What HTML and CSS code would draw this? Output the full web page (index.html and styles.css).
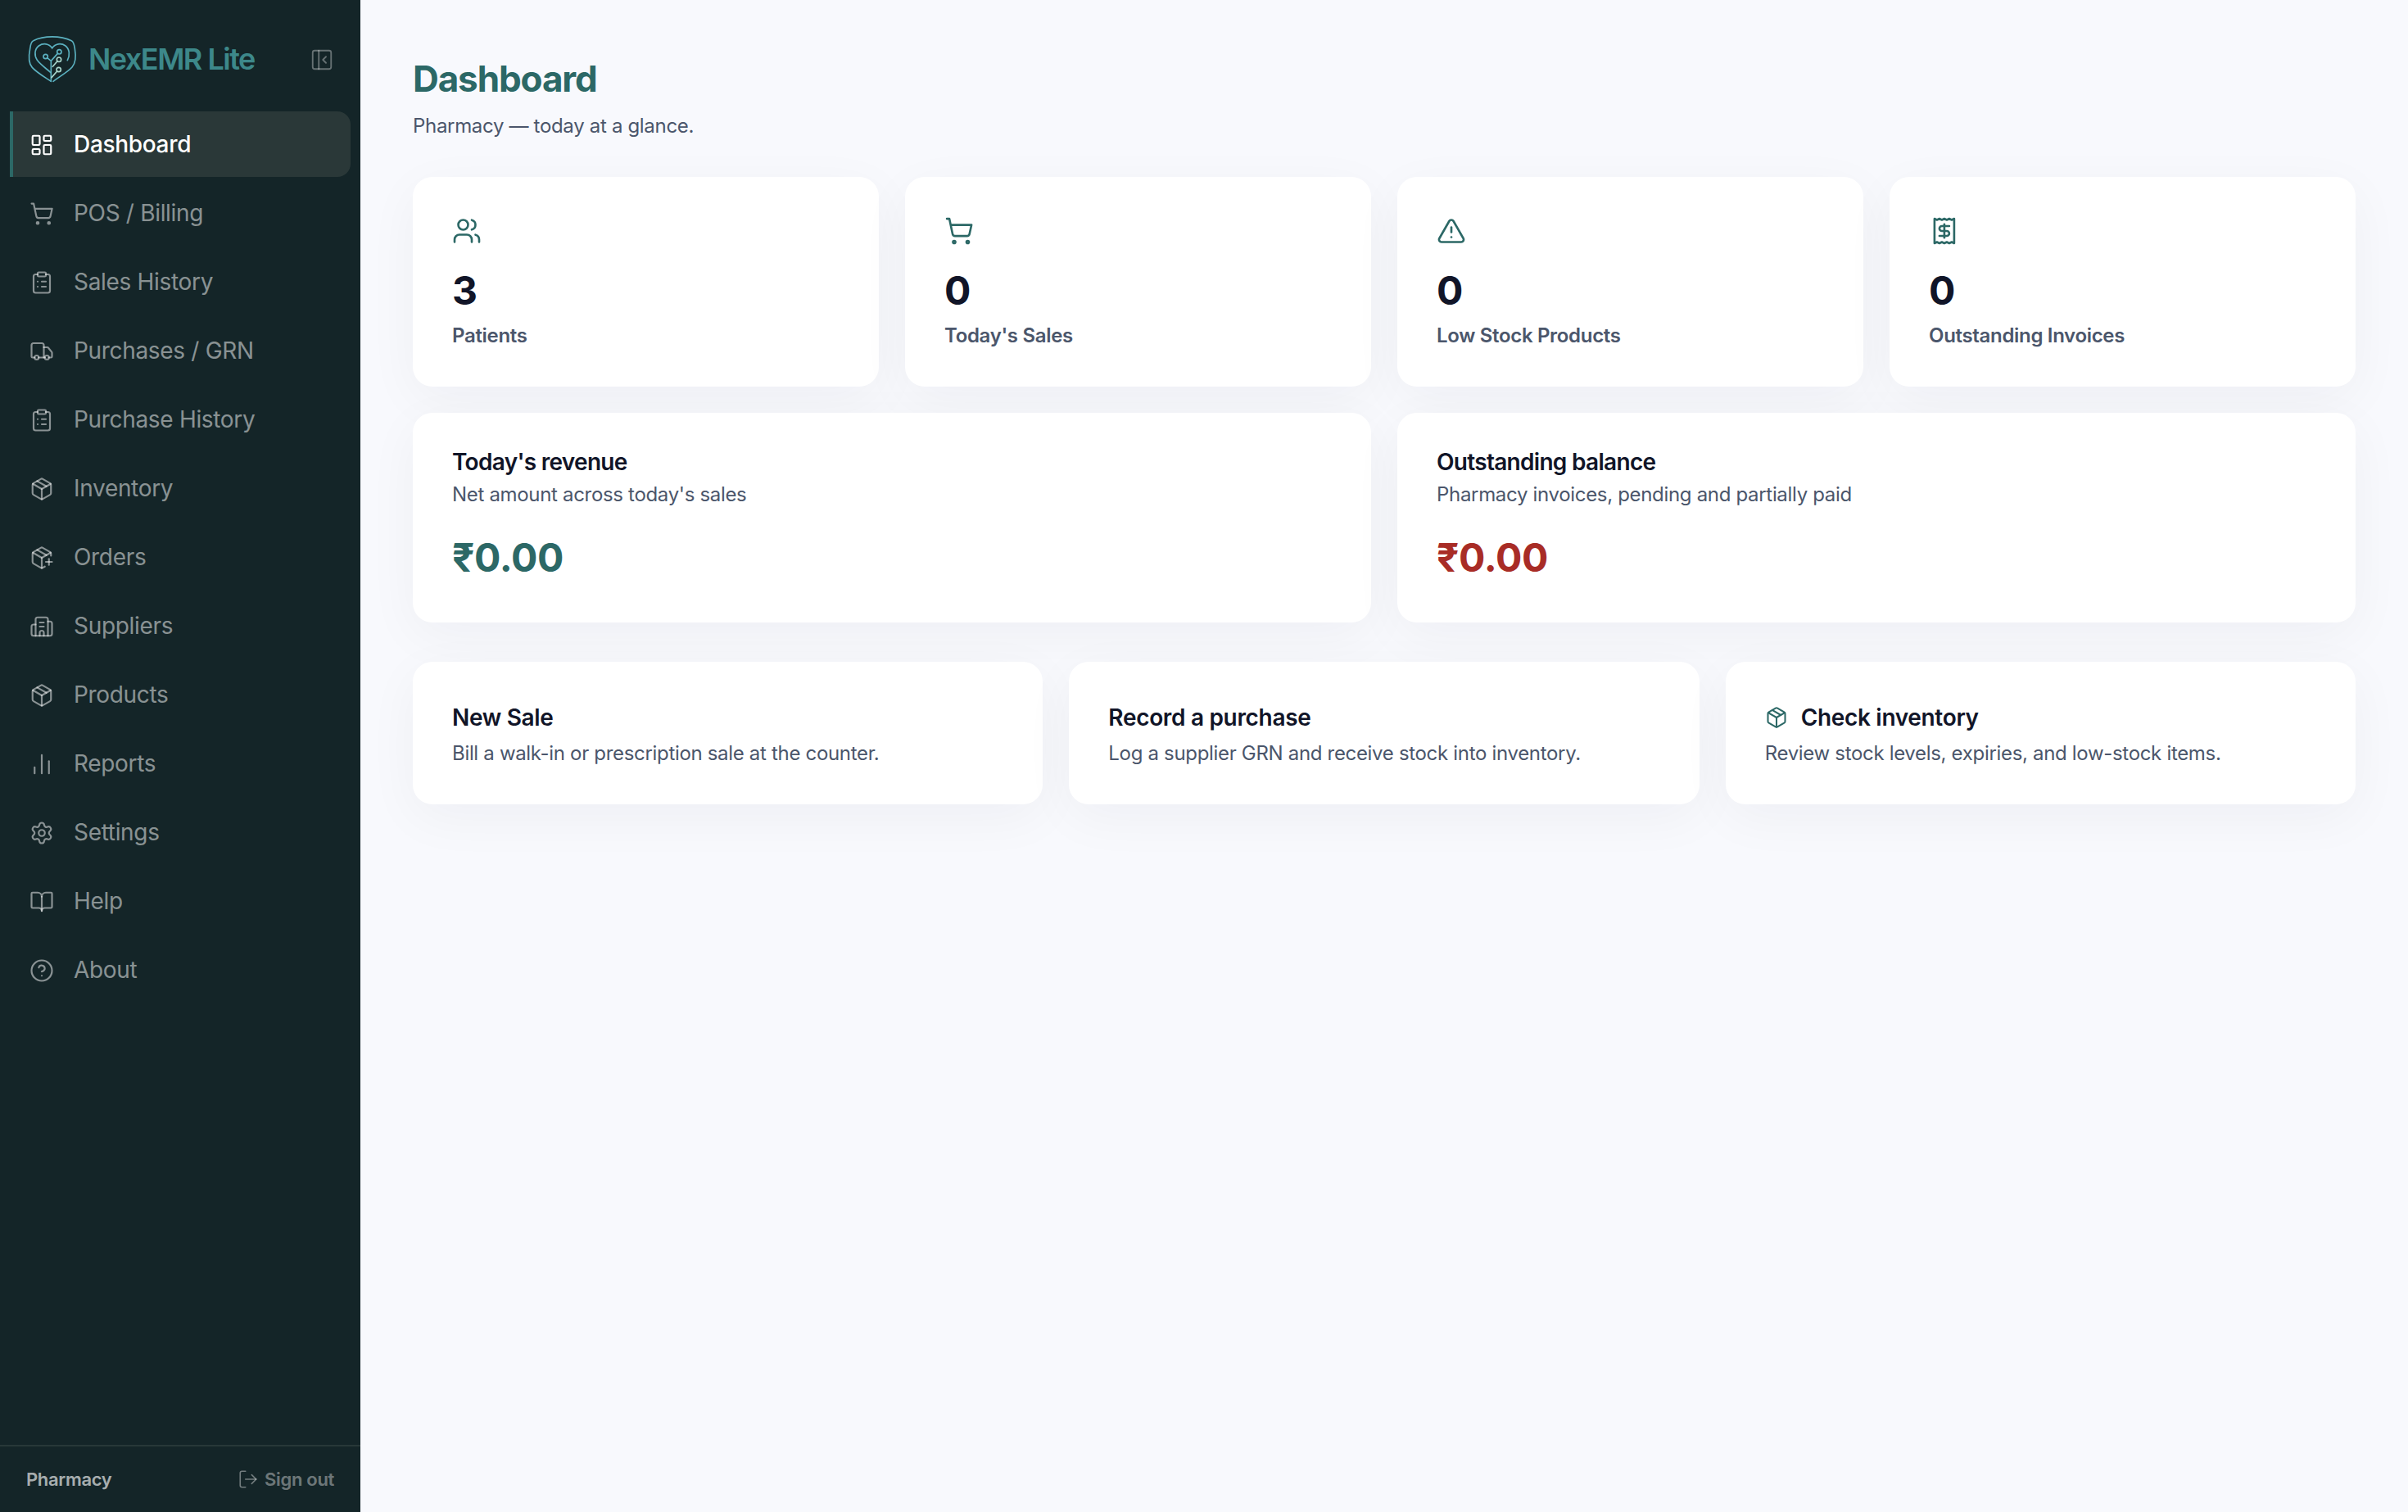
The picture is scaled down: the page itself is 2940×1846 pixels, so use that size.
FILE: index.html
```html
<!DOCTYPE html>
<html lang="en">
<head>
  <meta charset="UTF-8">
  <meta name="viewport" content="width=device-width, initial-scale=1.0">
  <title>NexEMR Lite</title>
  <link rel="stylesheet" href="styles.css">
</head>
<body>
  <!-- shared icons -->
  <svg class="sprite">
    <symbol id="i-dashboard" viewBox="0 0 24 24"><rect x="3" y="3" width="7" height="9" rx="1"/><rect x="14" y="3" width="7" height="5" rx="1"/><rect x="14" y="12" width="7" height="9" rx="1"/><rect x="3" y="16" width="7" height="5" rx="1"/></symbol>
    <symbol id="i-cart" viewBox="0 0 24 24"><circle cx="8" cy="21" r="1"/><circle cx="19" cy="21" r="1"/><path d="M2.05 2.05h2l2.66 12.42a2 2 0 0 0 2 1.58h9.78a2 2 0 0 0 1.95-1.57l1.65-7.43H5.12"/></symbol>
    <symbol id="i-clipboard" viewBox="0 0 24 24"><rect x="8" y="2" width="8" height="4" rx="1"/><path d="M16 4h2a2 2 0 0 1 2 2v14a2 2 0 0 1-2 2H6a2 2 0 0 1-2-2V6a2 2 0 0 1 2-2h2"/><path d="M12 11h4"/><path d="M12 16h4"/><path d="M8 11h.01"/><path d="M8 16h.01"/></symbol>
    <symbol id="i-truck" viewBox="0 0 24 24"><path d="M14 18V6a2 2 0 0 0-2-2H4a2 2 0 0 0-2 2v11a1 1 0 0 0 1 1h2"/><path d="M15 18H9"/><path d="M19 18h2a1 1 0 0 0 1-1v-3.65a1 1 0 0 0-.22-.624l-3.48-4.35A1 1 0 0 0 17.52 8H14"/><circle cx="17" cy="18" r="2"/><circle cx="7" cy="18" r="2"/></symbol>
    <symbol id="i-package" viewBox="0 0 24 24"><path d="M11 21.73a2 2 0 0 0 2 0l7-4A2 2 0 0 0 21 16V8a2 2 0 0 0-1-1.73l-7-4a2 2 0 0 0-2 0l-7 4A2 2 0 0 0 3 8v8a2 2 0 0 0 1 1.73z"/><path d="M12 22V12"/><path d="M3.29 7 12 12l8.71-5"/><path d="m7.5 4.27 9 5.15"/></symbol>
    <symbol id="i-package-plus" viewBox="0 0 24 24"><path d="M16 16h6"/><path d="M19 13v6"/><path d="M21 10V8a2 2 0 0 0-1-1.73l-7-4a2 2 0 0 0-2 0l-7 4A2 2 0 0 0 3 8v8a2 2 0 0 0 1 1.73l7 4a2 2 0 0 0 2 0l2-1.14"/><path d="m7.5 4.27 9 5.15"/><path d="M3.29 7 12 12l8.71-5"/><path d="M12 22V12"/></symbol>
    <symbol id="i-building" viewBox="0 0 24 24"><path d="M10 12h4"/><path d="M10 8h4"/><path d="M14 21v-3a2 2 0 0 0-4 0v3"/><path d="M6 10H4a2 2 0 0 0-2 2v7a2 2 0 0 0 2 2h16a2 2 0 0 0 2-2V9a2 2 0 0 0-2-2h-2"/><path d="M6 21V5a2 2 0 0 1 2-2h8a2 2 0 0 1 2 2v16"/></symbol>
    <symbol id="i-chart" viewBox="0 0 24 24"><path d="M5 21v-6"/><path d="M12 21V3"/><path d="M19 21V9"/></symbol>
    <symbol id="i-settings" viewBox="0 0 24 24"><path d="M9.671 4.136a2.34 2.34 0 0 1 4.659 0 2.34 2.34 0 0 0 3.319 1.915 2.34 2.34 0 0 1 2.33 4.033 2.34 2.34 0 0 0 0 3.831 2.34 2.34 0 0 1-2.33 4.033 2.34 2.34 0 0 0-3.319 1.915 2.34 2.34 0 0 1-4.659 0 2.34 2.34 0 0 0-3.32-1.915 2.34 2.34 0 0 1-2.33-4.033 2.34 2.34 0 0 0 0-3.831A2.34 2.34 0 0 1 6.35 6.051a2.34 2.34 0 0 0 3.319-1.915"/><circle cx="12" cy="12" r="3"/></symbol>
    <symbol id="i-book" viewBox="0 0 24 24"><path d="M12 7v14"/><path d="M3 18a1 1 0 0 1-1-1V4a1 1 0 0 1 1-1h5a4 4 0 0 1 4 4 4 4 0 0 1 4-4h5a1 1 0 0 1 1 1v13a1 1 0 0 1-1 1h-6a3 3 0 0 0-3 3 3 3 0 0 0-3-3z"/></symbol>
    <symbol id="i-help" viewBox="0 0 24 24"><circle cx="12" cy="12" r="10"/><path d="M9.09 9a3 3 0 0 1 5.83 1c0 2-3 3-3 3"/><path d="M12 17h.01"/></symbol>
    <symbol id="i-panel" viewBox="0 0 24 24"><rect x="3" y="3" width="18" height="18" rx="2"/><path d="M9 3v18"/><path d="m16 15-3-3 3-3"/></symbol>
    <symbol id="i-logout" viewBox="0 0 24 24"><path d="m16 17 5-5-5-5"/><path d="M21 12H9"/><path d="M9 21H5a2 2 0 0 1-2-2V5a2 2 0 0 1 2-2h4"/></symbol>
    <symbol id="i-users" viewBox="0 0 24 24"><path d="M16 21v-2a4 4 0 0 0-4-4H6a4 4 0 0 0-4 4v2"/><path d="M16 3.128a4 4 0 0 1 0 7.744"/><path d="M22 21v-2a4 4 0 0 0-3-3.87"/><circle cx="9" cy="7" r="4"/></symbol>
    <symbol id="i-alert" viewBox="0 0 24 24"><path d="m21.73 18-8-14a2 2 0 0 0-3.48 0l-8 14A2 2 0 0 0 4 21h16a2 2 0 0 0 1.73-3"/><path d="M12 9v4"/><path d="M12 17h.01"/></symbol>
    <symbol id="i-receipt" viewBox="-0.6 0 24 24"><path d="M4 2v20l2-1 2 1 2-1 2 1 2-1 2 1 2-1 2 1V2l-2 1-2-1-2 1-2-1-2 1-2-1-2 1Z"/><path d="M16 8h-6a2 2 0 1 0 0 4h4a2 2 0 1 1 0 4H8"/><path d="M12 17.500V6.500"/></symbol>
  </svg>

  <div class="app">
    <aside class="sidebar">
      <div class="brand">
        <svg class="logo" viewBox="36 33 192 192">
          <path d="M127 208 C100 190 74 175 58 157 C46 144 44 118 50 88 C52 70 55 62 62 59 C100 40 162 40 202 59 C208 62 212 72 214 88 C219 118 216 142 204 156 C188 174 158 190 135 208"/>
          <path d="M187 131 C197 112 195 90 180 78 C163 66 142 70 131 86 C120 70 99 66 82 78 C66 90 65 113 76 130 C87 146 106 158 126 176"/>
          <path d="M127 208V133M113 122l14 11M151 106l-24 27"/>
          <circle cx="107" cy="117" r="8"/>
          <circle cx="157" cy="100" r="8"/>
          <g class="logo-light">
            <circle cx="156" cy="128" r="8"/>
            <circle cx="155" cy="165" r="8"/>
            <path d="M150 134l-17 20M149 171l-20 23"/>
          </g>
        </svg>
        <span class="brand-name">NexEMR Lite</span>
        <svg class="icon collapse"><use href="#i-panel"/></svg>
      </div>

      <nav class="nav">
        <a class="nav-item active"><svg class="icon"><use href="#i-dashboard"/></svg>Dashboard</a>
        <a class="nav-item"><svg class="icon"><use href="#i-cart"/></svg>POS / Billing</a>
        <a class="nav-item"><svg class="icon"><use href="#i-clipboard"/></svg>Sales History</a>
        <a class="nav-item"><svg class="icon"><use href="#i-truck"/></svg>Purchases / GRN</a>
        <a class="nav-item"><svg class="icon"><use href="#i-clipboard"/></svg>Purchase History</a>
        <a class="nav-item"><svg class="icon"><use href="#i-package"/></svg>Inventory</a>
        <a class="nav-item"><svg class="icon"><use href="#i-package-plus"/></svg>Orders</a>
        <a class="nav-item"><svg class="icon"><use href="#i-building"/></svg>Suppliers</a>
        <a class="nav-item"><svg class="icon"><use href="#i-package"/></svg>Products</a>
        <a class="nav-item"><svg class="icon"><use href="#i-chart"/></svg>Reports</a>
        <a class="nav-item"><svg class="icon"><use href="#i-settings"/></svg>Settings</a>
        <a class="nav-item"><svg class="icon"><use href="#i-book"/></svg>Help</a>
        <a class="nav-item"><svg class="icon"><use href="#i-help"/></svg>About</a>
      </nav>

      <div class="user-bar">
        <span class="user-name">Pharmacy</span>
        <a class="sign-out"><svg class="icon"><use href="#i-logout"/></svg>Sign out</a>
      </div>
    </aside>

    <main class="main">
      <h1 class="title">Dashboard</h1>
      <p class="subtitle">Pharmacy — today at a glance.</p>

      <section class="grid stats">
        <div class="card">
          <svg class="icon"><use href="#i-users"/></svg>
          <div class="stat-value">3</div>
          <div class="stat-label">Patients</div>
        </div>
        <div class="card">
          <svg class="icon"><use href="#i-cart"/></svg>
          <div class="stat-value">0</div>
          <div class="stat-label">Today's Sales</div>
        </div>
        <div class="card">
          <svg class="icon"><use href="#i-alert"/></svg>
          <div class="stat-value">0</div>
          <div class="stat-label">Low Stock Products</div>
        </div>
        <div class="card">
          <svg class="icon"><use href="#i-receipt"/></svg>
          <div class="stat-value">0</div>
          <div class="stat-label">Outstanding Invoices</div>
        </div>
      </section>

      <section class="grid totals">
        <div class="card">
          <h2 class="card-title">Today's revenue</h2>
          <p class="card-text">Net amount across today's sales</p>
          <div class="amount">₹0.00</div>
        </div>
        <div class="card">
          <h2 class="card-title">Outstanding balance</h2>
          <p class="card-text">Pharmacy invoices, pending and partially paid</p>
          <div class="amount due">₹0.00</div>
        </div>
      </section>

      <section class="grid actions">
        <a class="card">
          <h2 class="card-title">New Sale</h2>
          <p class="card-text">Bill a walk-in or prescription sale at the counter.</p>
        </a>
        <a class="card">
          <h2 class="card-title">Record a purchase</h2>
          <p class="card-text">Log a supplier GRN and receive stock into inventory.</p>
        </a>
        <a class="card">
          <h2 class="card-title"><svg class="icon"><use href="#i-package"/></svg>Check inventory</h2>
          <p class="card-text">Review stock levels, expiries, and low-stock items.</p>
        </a>
      </section>
    </main>
  </div>
</body>
</html>
```

FILE: styles.css
```css
*{
  margin: 0;
  padding: 0;
  box-sizing: border-box;
}
body{
  font-family: Inter, "Liberation Sans", sans-serif;
  letter-spacing: -0.32px;
  color: #111528;
  background: #f8f9fd;
}
.sprite{
  display: none;
}
.icon{
  display: block;
  flex: none;
  width: 30px;
  height: 30px;
  fill: none;
  stroke: currentColor;
  stroke-width: 1.75;
  stroke-linecap: round;
  stroke-linejoin: round;
}
.app{
  display: flex;
  height: 100vh;
}

/* sidebar */
.sidebar{
  display: flex;
  flex-direction: column;
  flex: none;
  width: 440px;
  color: rgba(255,255,255,0.5);
  background: #142528;
}
.brand{
  display: flex;
  align-items: center;
  height: 136px;
  padding: 10px 32px 0;
}
.logo{
  width: 64px;
  height: 64px;
  fill: none;
  stroke: #5bb0bf;
  stroke-width: 5;
  stroke-linecap: round;
}
.logo-light{
  stroke: #a8d5cc;
}
.brand-name{
  flex: 1;
  margin-left: 12px;
  padding-bottom: 2px;
  font-size: 36px;
  font-weight: 600;
  letter-spacing: -1.5px;
  color: #3d888a;
}
.collapse{
  color: rgba(255,255,255,0.35);
  stroke-width: 1.5;
}
.nav{
  display: flex;
  flex: 1;
  flex-direction: column;
  gap: 4px;
  padding: 0 12px;
}
.nav-item{
  display: flex;
  align-items: center;
  gap: 24px;
  height: 80px;
  padding-left: 20px;
  border-left: 4px solid transparent;
  font-size: 28px;
}
.nav-item .icon{
  margin-top: 2px;
}
.nav-item.active{
  font-weight: 500;
  color: #fff;
  background: #2a3838;
  border-left-color: #2c6866;
  border-radius: 0 16px 16px 0;
}
.user-bar{
  display: flex;
  align-items: center;
  justify-content: space-between;
  height: 82px;
  padding: 0 32px;
  border-top: 2px solid #283838;
  font-size: 22px;
  font-weight: 600;
}
.user-name{
  color: rgba(255,255,255,0.65);
}
.sign-out{
  display: flex;
  align-items: center;
  gap: 7px;
  color: rgba(255,255,255,0.4);
}
.sign-out .icon{
  width: 26px;
  height: 26px;
  stroke-width: 1.5;
}

/* content */
.main{
  flex: 1;
  padding: 64px;
}
.title{
  font-size: 44px;
  line-height: 64px;
  font-weight: 700;
  letter-spacing: -1.1px;
  color: #2c6866;
}
.subtitle{
  margin: 8px 0 44px;
  font-size: 24px;
  line-height: 36px;
  color: #4b566b;
}
.grid{
  display: grid;
  gap: 32px;
}
.card{
  padding: 48px;
  background: #fff;
  border-radius: 24px;
  box-shadow: 0 16px 64px rgba(17,24,39,0.045);
}
.card-title{
  font-size: 28px;
  font-weight: 600;
}
.card-text{
  font-size: 24px;
  color: #4b566b;
}

.stats{
  grid-template-columns: repeat(4, 1fr);
}
.stats .card{
  height: 256px;
}
.stats .icon{
  width: 36px;
  height: 36px;
  color: #2c6866;
}
.stat-value{
  margin: 23px 0 8px;
  font-size: 48px;
  line-height: 64px;
  font-weight: 700;
}
.stat-label{
  font-size: 24px;
  line-height: 30px;
  font-weight: 600;
  color: #4b566b;
}

.totals{
  grid-template-columns: repeat(2, 1fr);
  margin: 32px 0 48px;
}
.totals .card{
  height: 256px;
}
.totals .card-title{
  line-height: 24px;
  letter-spacing: -0.7px;
}
.totals .card-text{
  margin: 10px 0 27px;
  line-height: 36px;
}
.amount{
  font-size: 48px;
  line-height: 64px;
  font-weight: 700;
  color: #2c6866;
}
.amount.due{
  color: #a82c26;
}

.actions{
  grid-template-columns: repeat(3, 1fr);
}
.actions .card{
  height: 174px;
}
.actions .card-title{
  display: flex;
  align-items: center;
  gap: 16px;
  line-height: 40px;
}
.actions .card-text{
  margin-top: 9px;
  line-height: 30px;
}
.actions .icon{
  width: 28px;
  height: 28px;
  color: #2c6866;
}
```
